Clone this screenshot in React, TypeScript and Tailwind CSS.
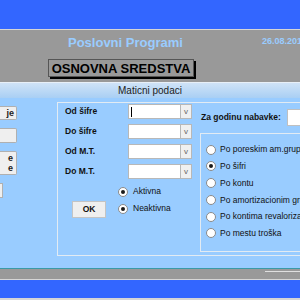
import React from "react";

function Radio({ checked }: { checked?: boolean }) {
  return (
    <span className="w-[10px] h-[10px] rounded-full bg-white border border-[#8a8a8a] flex items-center justify-center shrink-0">
      {checked && <span className="w-[4px] h-[4px] rounded-full bg-[#1a1a1a]" />}
    </span>
  );
}

function Combo({ cursor }: { cursor?: boolean }) {
  return (
    <div className="flex h-[15px]">
      <div className="w-[53px] h-full bg-white border border-[#b8b8b8] flex items-center pl-[2px]">
        {cursor && <span className="w-[1px] h-[10px] bg-black" />}
      </div>
      <div className="w-[11px] h-full bg-[#f0f0f0] border border-l-0 border-[#b8b8b8] flex items-center justify-center text-[8px] text-[#666] leading-none">
        v
      </div>
    </div>
  );
}

const groupItems = [
  { label: "Po poreskim am.grupama", checked: false },
  { label: "Po šifri", checked: true },
  { label: "Po kontu", checked: false },
  { label: "Po amortizacionim grupama", checked: false },
  { label: "Po kontima revalorizacije", checked: false },
  { label: "Po mestu troška", checked: false },
];

export default function App() {
  return (
    <div
      className="w-[300px] h-[300px] overflow-hidden flex flex-col bg-[#99ccff]"
      style={{ fontFamily: '"Liberation Sans", Arial, sans-serif' }}
    >
      {/* top window band */}
      <div className="h-[29px] bg-[#3366ff] shrink-0" />
      <div className="h-[1px] bg-[#d6d6d6] shrink-0" />

      {/* gray title area */}
      <div className="h-[52px] bg-[#999999] shrink-0 flex flex-col">
        <div className="flex items-start pt-[6px]">
          <span className="ml-[68px] text-[13px] font-bold text-[#99ccff] leading-none whitespace-nowrap">
            Poslovni Programi
          </span>
          <span className="ml-[79px] mt-[1px] text-[9px] font-bold text-[#99ccff] leading-none whitespace-nowrap">
            26.08.2014
          </span>
        </div>
        <div className="ml-[48px] mt-[10px] w-[146px] h-[18px] relative">
          <div className="absolute left-[2px] top-[2px] w-full h-full bg-black" />
          <div className="absolute inset-0 bg-[#999999] border border-[#555] flex items-center justify-center text-[13px] font-bold text-black leading-none whitespace-nowrap">
            OSNOVNA SREDSTVA
          </div>
        </div>
      </div>

      {/* section header */}
      <div className="h-[16px] shrink-0 bg-gradient-to-b from-[#cfe3f7] to-[#a9cff4] border-t border-[#e8f0f8] flex items-center justify-center text-[10px] text-[#222] leading-none">
        Maticni podaci
      </div>

      {/* main form */}
      <div className="h-[170px] shrink-0 flex">
        {/* left command buttons */}
        <div className="w-[18px] flex flex-col pt-[8px] gap-[8px]">
          <div className="w-[17px] h-[14px] bg-[#efefef] border border-[#b0b0b0] border-l-0 rounded-r-[2px] flex items-center justify-end pr-[2px] text-[9px] font-bold text-[#222] leading-none">
            je
          </div>
          <div className="w-[17px] h-[15px] bg-[#efefef] border border-[#b0b0b0] border-l-0 rounded-r-[2px]" />
          <div className="w-[17px] h-[24px] bg-[#efefef] border border-[#b0b0b0] border-l-0 rounded-r-[2px] flex flex-col items-end justify-center pr-[3px] text-[9px] font-bold text-[#222] leading-[10px]">
            <span>e</span>
            <span>e</span>
          </div>
          <div className="w-[3px] h-[15px] bg-[#efefef] border border-[#b0b0b0] border-l-0" />
        </div>

        {/* big frame */}
        <div className="ml-[40px] mt-[4px] h-[154px] flex-1 border border-r-0 border-[#e2ebf3] flex">
          {/* left part */}
          <div className="w-[141px] flex flex-col pt-[1px]">
            {["Od šifre", "Do šifre", "Od M.T.", "Do M.T."].map((l, i) => (
              <div key={l} className="flex items-center h-[15px] mb-[5px]">
                <span className="w-[70px] pl-[7px] text-[8.5px] font-bold text-[#111] leading-none whitespace-nowrap">
                  {l}
                </span>
                <Combo cursor={i === 0} />
              </div>
            ))}
            <div className="flex mt-[1px]">
              <div className="w-[70px] pt-[16px] pl-[14px]">
                <div className="w-[34px] h-[17px] bg-[#efefef] border border-[#c4c4c4] flex items-center justify-center text-[8.5px] font-bold text-[#111] leading-none">
                  OK
                </div>
              </div>
              <div className="flex flex-col gap-[6px] pt-[1px]">
                <div className="flex items-center gap-[5px] ml-[-10px] h-[11px]">
                  <Radio checked />
                  <span className="text-[8.5px] text-[#111] leading-none">Aktivna</span>
                </div>
                <div className="flex items-center gap-[5px] ml-[-10px] h-[11px]">
                  <Radio checked />
                  <span className="text-[8.5px] text-[#111] leading-none">Neaktivna</span>
                </div>
              </div>
            </div>
          </div>

          {/* right part */}
          <div className="flex-1 flex flex-col">
            <div className="flex items-center mt-[6px] h-[17px]">
              <span className="ml-[2px] text-[8.5px] font-bold text-[#111] leading-none whitespace-nowrap">
                Za godinu nabavke:
              </span>
              <div className="ml-[6px] w-[20px] h-[17px] bg-white border border-[#c0c0c0] shrink-0" />
            </div>
            <div className="mt-[7px] ml-[1px] h-[119px] border border-r-0 border-[#e2ebf3] flex flex-col pt-[10px] gap-[5.8px] overflow-hidden">
              {groupItems.map((it) => (
                <div key={it.label} className="flex items-center gap-[4px] pl-[5px] h-[11px] whitespace-nowrap">
                  <Radio checked={it.checked} />
                  <span className="text-[8.5px] text-[#111] leading-none">{it.label}</span>
                </div>
              ))}
            </div>
          </div>
        </div>
      </div>

      {/* bottom bands */}
      <div className="h-[1px] bg-[#3a9aa6] shrink-0" />
      <div className="h-[10px] bg-[#999999] shrink-0 flex justify-end pt-[2px]">
        <div className="w-[35px] h-[1px] bg-[#e0e0e0]" />
      </div>
      <div className="h-[1px] bg-[#d6d6d6] shrink-0" />
      <div className="h-[18px] bg-[#3366ff] shrink-0" />
      <div className="flex-1 bg-[#d6d6d6]" />
    </div>
  );
}
